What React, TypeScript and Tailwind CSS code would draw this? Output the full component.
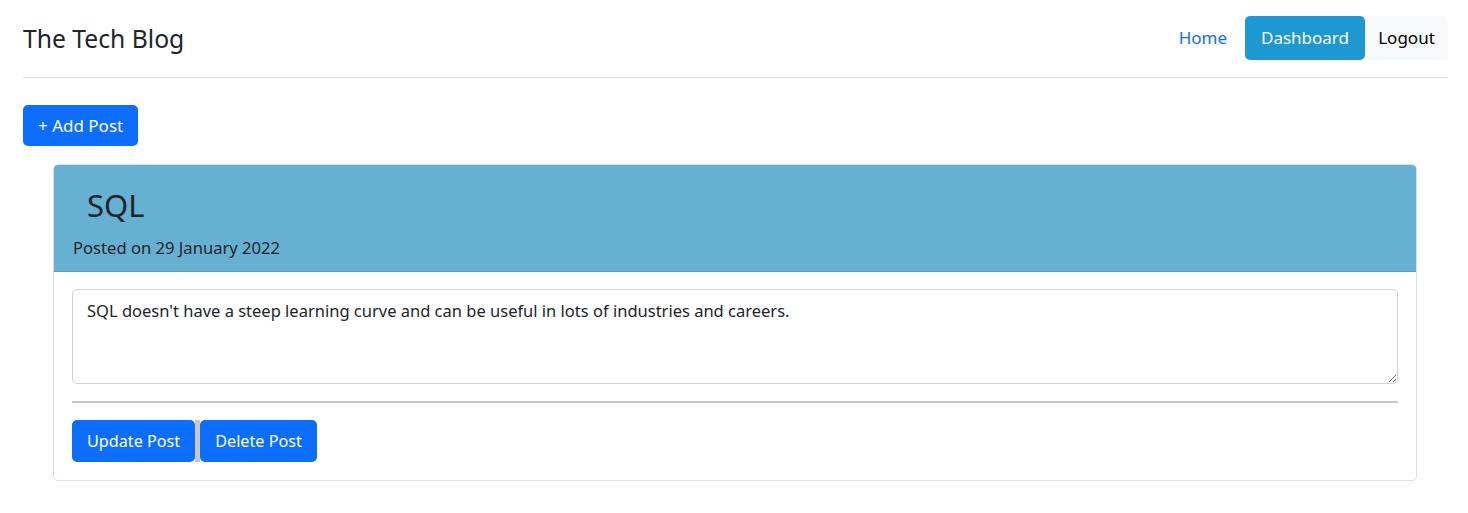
import React from 'react';

const font = { fontFamily: '"Noto Sans", "Open Sans", sans-serif' };

const Header = () => (
  <header className="flex items-center justify-between border-b border-[#dee2e6] h-[78px] pb-[2px]">
    <h1 className="text-[24.7px] text-[#212529] leading-none mt-[4px]">The Tech Blog</h1>
    <nav className="flex items-center text-[17px]">
      <a className="text-[#0d6efd] px-[18px]">Home</a>
      <a className="bg-[#1e98d0] text-white rounded-[5px] h-[44px] w-[120px] flex items-center justify-center">Dashboard</a>
      <a className="bg-[#f8f9fa] text-black rounded-[5px] h-[44px] w-[83px] flex items-center justify-center">Logout</a>
    </nav>
  </header>
);

export default function App() {
  return (
    <div className="min-h-[513px] bg-white pl-[23px] pr-[20px] text-[#212529]" style={font}>
      <Header />
      <button className="mt-[27px] h-[41px] px-[15px] rounded-[5px] bg-[#0d6efd] text-white text-[17px]">+ Add Post</button>
      <div className="ml-[30px] mr-[31px] mt-[18px] border border-[#dfdfdf] rounded-[5px] overflow-hidden">
        <div className="bg-[#66b0d2] border-b border-[#5a9cbb] h-[107px] px-[19px] pt-[20px]">
          <h2 className="text-[31px] leading-[40px] pl-[14px]">SQL</h2>
          <p className="text-[16.6px] mt-[11px]">Posted on 29 January 2022</p>
        </div>
        <div className="px-[18px] pt-[17px] pb-[18px]">
          <textarea
            className="block w-full h-[95px] border border-[#ced4da] rounded-[5px] px-[14px] py-[9px] text-[16.5px] resize-y outline-none"
            defaultValue="SQL doesn't have a steep learning curve and can be useful in lots of industries and careers."
          />
          <hr className="mt-[17px] border-t-2 border-[#c8c8c8]" />
          <div className="flex mt-[17px]">
            <button className="h-[42px] px-[15px] rounded-[5px] bg-[#0d6efd] text-white text-[16.2px]">Update Post</button>
            <div className="w-[5px] h-[42px] bg-[#c8c8c8]" />
            <button className="h-[42px] px-[15px] rounded-[5px] bg-[#0d6efd] text-white text-[16.2px]">Delete Post</button>
          </div>
        </div>
      </div>
    </div>
  );
}
